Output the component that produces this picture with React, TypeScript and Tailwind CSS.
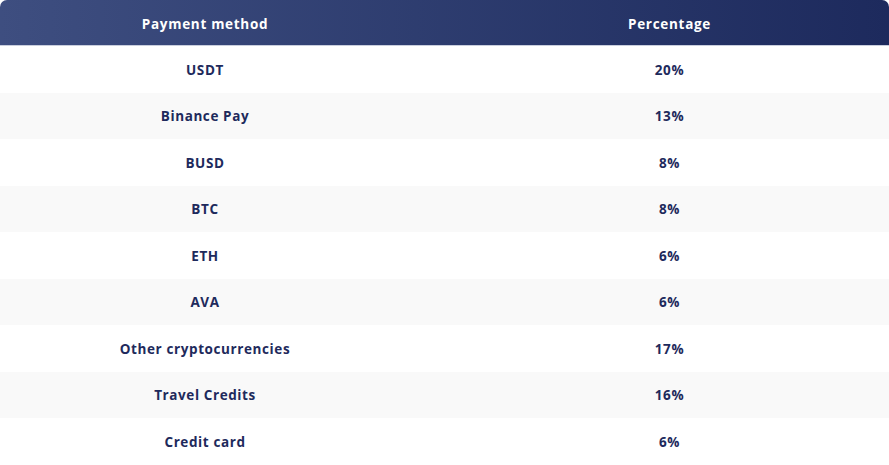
const rows = [
  { method: "USDT", pct: "20%" },
  { method: "Binance Pay", pct: "13%" },
  { method: "BUSD", pct: "8%" },
  { method: "BTC", pct: "8%" },
  { method: "ETH", pct: "6%" },
  { method: "AVA", pct: "6%" },
  { method: "Other cryptocurrencies", pct: "17%" },
  { method: "Travel Credits", pct: "16%" },
  { method: "Credit card", pct: "6%" },
];

export default function App() {
  return (
    <div className="w-[889px] h-[465px] bg-white overflow-hidden font-['Open_Sans',sans-serif]">
      <div className="flex h-[46px] items-center pt-[3px] rounded-t-[7px] bg-gradient-to-r from-[#3e4e80] to-[#1d2a5d] border-b border-[#c9cedd] text-white text-[13.5px] font-bold tracking-[0.7px]">
        <div className="w-[410px] text-center">Payment method</div>
        <div className="flex-1 pl-[40px] text-center">Percentage</div>
      </div>
      {rows.map((r, i) => (
        <div
          key={r.method}
          className={`flex h-[46.5px] items-center pt-[1px] text-[13.5px] font-bold tracking-[0.6px] text-[#1e2a5c] ${
            i % 2 === 1 ? "bg-[#f9f9f9]" : "bg-white"
          }`}
        >
          <div className="w-[410px] text-center">{r.method}</div>
          <div className="flex-1 pl-[40px] text-center">{r.pct}</div>
        </div>
      ))}
    </div>
  );
}
